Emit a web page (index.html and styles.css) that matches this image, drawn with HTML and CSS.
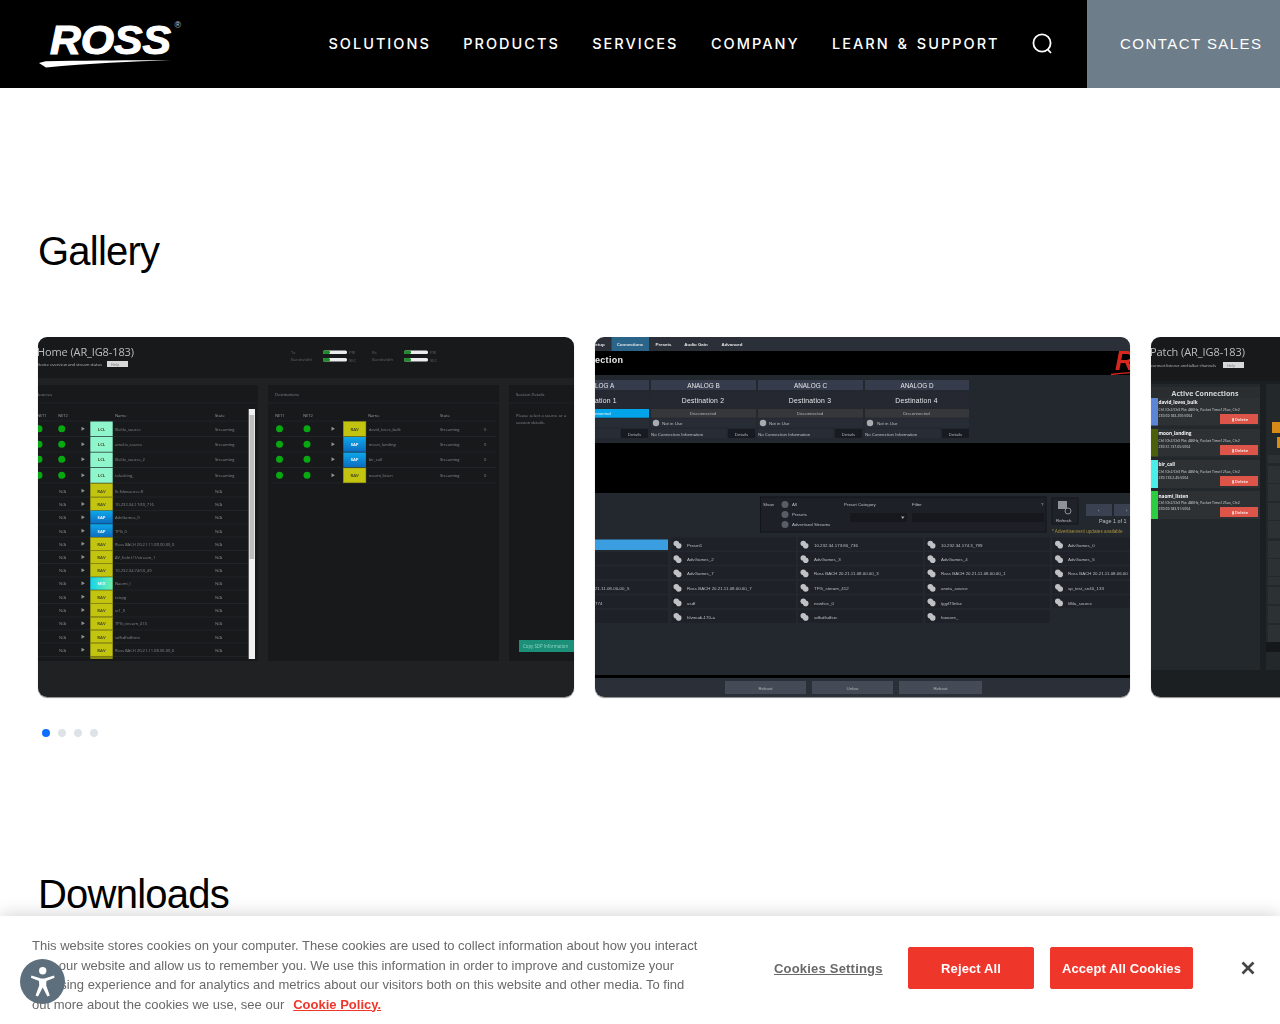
FILE: index.html
```html
<!DOCTYPE html>
<html lang="en">
<head>
<meta charset="utf-8">
<title>Ross Video – Gallery</title>
<link rel="stylesheet" href="styles.css">
</head>
<body>
<header class="site-header">
  <a class="logo" href="#" aria-label="Ross">
    <svg width="150" height="88" viewBox="0 0 150 88">
      <text class="logo-word" x="12" y="53.5" textLength="121" lengthAdjust="spacingAndGlyphs">ROSS</text>
      <text class="logo-reg" x="136.5" y="28">®</text>
      <path class="logo-swoosh" d="M1 63 L7.5 61.2 C50 60.4 95 60 133 60.2 C95 61.4 50 63.5 8 67.4 Z"/>
    </svg>
  </a>
  <nav class="main-nav">
    <a href="#">SOLUTIONS</a>
    <a href="#">PRODUCTS</a>
    <a href="#">SERVICES</a>
    <a href="#">COMPANY</a>
    <a href="#">LEARN &amp; SUPPORT</a>
    <button class="search" aria-label="Search">
      <svg width="22" height="22" viewBox="0 0 22 22"><circle class="search-ring" cx="10" cy="10" r="8.6"/><path class="search-ring" d="M15.6 16.4 L19 20"/></svg>
    </button>
  </nav>
  <a class="contact" href="#">CONTACT SALES</a>
</header>

<main class="content">
  <section class="gallery-section">
    <h2 class="section-title">Gallery</h2>
    <div class="track">

      <!-- Slide 1 : Home -->
      <figure class="slide">
        <svg class="shot" viewBox="38 337 536 360" width="536" height="360">
          <defs>
            <linearGradient id="g-sap" x1="0" y1="0" x2="0" y2="1"><stop offset="0" stop-color="#0ea8ea"/><stop offset="1" stop-color="#0d6cc0"/></linearGradient>
            <linearGradient id="g-mix" x1="0" y1="0" x2="1" y2="0"><stop offset="0" stop-color="#16d4ec"/><stop offset="1" stop-color="#6ff0a8"/></linearGradient>
          </defs>
          <rect class="s1-bg" x="38" y="337" width="536" height="360"/>
          <rect class="s1-top" x="38" y="337" width="536" height="41"/>
          <rect class="s1-panel" x="38" y="385" width="220" height="276"/>
          <rect class="s1-panel" x="268" y="385" width="231" height="276"/>
          <rect class="s1-panel" x="509" y="385" width="65" height="276"/>
          <text class="t-title" x="37" y="355.5" textLength="97">Home (AR_IG8-183)</text>
          <text class="t-tiny" x="37" y="366" textLength="65">device overview and stream status</text>
          <rect class="help" x="107" y="361" width="21" height="6"/>
          <text class="t-help" x="111" y="365.6">Help</text>
          <text class="t-dim" x="291" y="353.5">Tx</text><text class="t-dim" x="291" y="361">Bandwidth</text>
          <text class="t-dim" x="372" y="353.5">Rx</text><text class="t-dim" x="372" y="361">Bandwidth</text>
          <rect class="bar" x="323" y="350.5" width="24" height="3.4" rx="1.5"/><rect class="bar-g" x="323" y="350.5" width="7" height="3.4" rx="1.5"/>
          <rect class="bar" x="323" y="358" width="24" height="3.4" rx="1.5"/><rect class="bar-g" x="323" y="358" width="7" height="3.4" rx="1.5"/>
          <rect class="bar" x="404" y="350.5" width="24" height="3.4" rx="1.5"/><rect class="bar-g" x="404" y="350.5" width="7" height="3.4" rx="1.5"/>
          <rect class="bar" x="404" y="358" width="24" height="3.4" rx="1.5"/><rect class="bar-g" x="404" y="358" width="7" height="3.4" rx="1.5"/>
          <text class="t-dim" x="349" y="354">PRI</text><text class="t-dim" x="349" y="362">SEC</text>
          <text class="t-dim" x="430" y="354">PRI</text><text class="t-dim" x="430" y="362">SEC</text>

          <text class="t-cell" x="37" y="395.5">Sources</text>
          <text class="t-cell" x="275" y="395.5">Destinations</text>
          <text class="t-cell" x="516" y="395.5">Session Details</text>
          <text class="t-cell" x="516" y="416.5">Please select a source or a</text>
          <text class="t-cell" x="516" y="423.5">session details.</text>
          <path class="s1-line" d="M38 403H258M268 403H499M509 403H574"/>

          <text class="t-head" x="37" y="417">NET1</text><text class="t-head" x="58" y="417">NET2</text>
          <text class="t-head" x="115" y="417">Name</text><text class="t-head" x="215" y="417">State</text>
          <text class="t-head" x="275" y="417">NET1</text><text class="t-head" x="303" y="417">NET2</text>
          <text class="t-head" x="368" y="417">Name</text><text class="t-head" x="440" y="417">State</text>

          <path class="s1-line" d="M38 421H248M38 436.5H248M38 452H248M38 467.5H248M38 483H248M38 497H248M38 510.5H248M38 524H248M38 537H248M38 550.5H248M38 563.5H248M38 577H248M38 590H248M38 603.5H248M38 617H248M38 630H248M38 643H248M38 656.5H248"/>
          <path class="s1-line" d="M272 421H496M272 436.5H496M272 452H496M272 467.5H496M272 483H496"/>

          <g class="dots-green">
            <circle cx="39" cy="428.7" r="3.5"/><circle cx="61.7" cy="428.7" r="3.5"/>
            <circle cx="39" cy="444.3" r="3.5"/><circle cx="61.7" cy="444.3" r="3.5"/>
            <circle cx="39" cy="459.3" r="3.5"/><circle cx="61.7" cy="459.3" r="3.5"/>
            <circle cx="39" cy="475.3" r="3.5"/><circle cx="61.7" cy="475.3" r="3.5"/>
            <circle cx="279.5" cy="428.7" r="3.5"/><circle cx="307" cy="428.7" r="3.5"/>
            <circle cx="279.5" cy="444.3" r="3.5"/><circle cx="307" cy="444.3" r="3.5"/>
            <circle cx="279.5" cy="459.3" r="3.5"/><circle cx="307" cy="459.3" r="3.5"/>
            <circle cx="279.5" cy="475.3" r="3.5"/><circle cx="307" cy="475.3" r="3.5"/>
          </g>
          <path class="play" d="M81.5 426.7l3.4 2-3.4 2zM81.5 442.3l3.4 2-3.4 2zM81.5 457.3l3.4 2-3.4 2zM81.5 473.3l3.4 2-3.4 2zM81.5 488.7l3.4 2-3.4 2zM81.5 502l3.4 2-3.4 2zM81.5 515.3l3.4 2-3.4 2zM81.5 528.7l3.4 2-3.4 2zM81.5 541.7l3.4 2-3.4 2zM81.5 555l3.4 2-3.4 2zM81.5 568.3l3.4 2-3.4 2zM81.5 581.3l3.4 2-3.4 2zM81.5 594.7l3.4 2-3.4 2zM81.5 608l3.4 2-3.4 2zM81.5 621.3l3.4 2-3.4 2zM81.5 634.7l3.4 2-3.4 2zM81.5 647.7l3.4 2-3.4 2zM331.5 426.7l3.4 2-3.4 2zM331.5 442.3l3.4 2-3.4 2zM331.5 457.3l3.4 2-3.4 2zM331.5 473.3l3.4 2-3.4 2z"/>

          <rect class="b-lcl" x="90.3" y="421.5" width="22.4" height="14.8"/>
          <rect class="b-lcl" x="90.3" y="437" width="22.4" height="14.8"/>
          <rect class="b-lcl" x="90.3" y="452.5" width="22.4" height="14.8"/>
          <rect class="b-lcl" x="90.3" y="468" width="22.4" height="14.8"/>
          <rect class="b-rav" x="90.3" y="483.5" width="22.4" height="13.4"/>
          <rect class="b-rav" x="90.3" y="497.3" width="22.4" height="13"/>
          <rect class="b-sap" x="90.3" y="510.7" width="22.4" height="13"/>
          <rect class="b-sap" x="90.3" y="524.2" width="22.4" height="12.8"/>
          <rect class="b-rav" x="90.3" y="537.4" width="22.4" height="13"/>
          <rect class="b-rav" x="90.3" y="550.8" width="22.4" height="12.6"/>
          <rect class="b-rav" x="90.3" y="563.8" width="22.4" height="13"/>
          <rect class="b-mix" x="90.3" y="577.2" width="22.4" height="12.6"/>
          <rect class="b-rav" x="90.3" y="590.2" width="22.4" height="13"/>
          <rect class="b-rav" x="90.3" y="603.7" width="22.4" height="13"/>
          <rect class="b-rav" x="90.3" y="617.2" width="22.4" height="12.6"/>
          <rect class="b-rav" x="90.3" y="630.2" width="22.4" height="12.6"/>
          <rect class="b-rav" x="90.3" y="643.2" width="22.4" height="13"/>
          <rect class="b-rav-edge" x="90.3" y="656.4" width="22.4" height="2.6"/>
          <rect class="b-rav" x="343.3" y="421.5" width="22.6" height="14.8"/>
          <rect class="b-sap" x="343.3" y="437" width="22.6" height="14.8"/>
          <rect class="b-sap" x="343.3" y="452.5" width="22.6" height="14.8"/>
          <rect class="b-rav" x="343.3" y="468" width="22.6" height="14.8"/>

          <g class="t-badge-d">
            <text x="101.5" y="430.6">LCL</text><text x="101.5" y="446.2">LCL</text><text x="101.5" y="461.2">LCL</text><text x="101.5" y="477.2">LCL</text>
            <text x="101.5" y="492.6">RAV</text><text x="101.5" y="505.9">RAV</text>
            <text x="101.5" y="545.6">RAV</text><text x="101.5" y="558.9">RAV</text><text x="101.5" y="572.2">RAV</text><text x="101.5" y="598.6">RAV</text><text x="101.5" y="611.9">RAV</text><text x="101.5" y="625.2">RAV</text><text x="101.5" y="638.6">RAV</text><text x="101.5" y="651.6">RAV</text>
            <text x="354.6" y="430.6">RAV</text><text x="354.6" y="477.2">RAV</text>
          </g>
          <g class="t-badge-w">
            <text x="101.5" y="519.2">SAP</text><text x="101.5" y="532.6">SAP</text><text x="101.5" y="585.2">MIX</text>
            <text x="354.6" y="446.2">SAP</text><text x="354.6" y="461.2">SAP</text>
          </g>
          <g class="t-cell">
            <text x="115" y="430.6">lllolilo_source</text><text x="215" y="430.6">Streaming</text>
            <text x="115" y="446.2">amelia_source</text><text x="215" y="446.2">Streaming</text>
            <text x="115" y="461.2">lllolilo_source_2</text><text x="215" y="461.2">Streaming</text>
            <text x="115" y="477.2">taleeking_</text><text x="215" y="477.2">Streaming</text>
            <text x="115" y="492.6">llr.fdwsource.fl</text>
            <text x="115" y="505.9">10.232.34.17:80_716</text>
            <text x="115" y="519.2">AdvGames_0</text>
            <text x="115" y="532.6">TPG_0</text>
            <text x="115" y="545.6">Ross BACH 20.21.11.08.00.00_0</text>
            <text x="115" y="558.9">AV_fcdn1/1/stream_1</text>
            <text x="115" y="572.2">10.232.34.74:50_49</text>
            <text x="115" y="585.2">Naomi_l</text>
            <text x="115" y="598.6">tstrpg</text>
            <text x="115" y="611.9">sr1_0</text>
            <text x="115" y="625.2">TPG_stream_413</text>
            <text x="115" y="638.6">sdfsdfsdfnnn</text>
            <text x="115" y="651.6">Ross BACH 20.21.11.08.06.00_6</text>
            <text x="368.7" y="430.6">david_loves_bulk</text><text x="440" y="430.6">Streaming</text>
            <text x="368.7" y="446.2">moon_landing</text><text x="440" y="446.2">Streaming</text>
            <text x="368.7" y="461.2">bir_call</text><text x="440" y="461.2">Streaming</text>
            <text x="368.7" y="477.2">naomi_listen</text><text x="440" y="477.2">Streaming</text>
            <text x="484" y="430.6">0</text><text x="484" y="446.2">0</text><text x="484" y="461.2">0</text><text x="484" y="477.2">0</text>
            <text x="59" y="492.6">N/A</text><text x="215" y="492.6">N/A</text><text x="59" y="505.9">N/A</text><text x="215" y="505.9">N/A</text>
            <text x="59" y="519.2">N/A</text><text x="215" y="519.2">N/A</text><text x="59" y="532.6">N/A</text><text x="215" y="532.6">N/A</text>
            <text x="59" y="545.6">N/A</text><text x="215" y="545.6">N/A</text><text x="59" y="558.9">N/A</text><text x="215" y="558.9">N/A</text>
            <text x="59" y="572.2">N/A</text><text x="215" y="572.2">N/A</text><text x="59" y="585.2">N/A</text><text x="215" y="585.2">N/A</text>
            <text x="59" y="598.6">N/A</text><text x="215" y="598.6">N/A</text><text x="59" y="611.9">N/A</text><text x="215" y="611.9">N/A</text>
            <text x="59" y="625.2">N/A</text><text x="215" y="625.2">N/A</text><text x="59" y="638.6">N/A</text><text x="215" y="638.6">N/A</text>
            <text x="59" y="651.6">N/A</text><text x="215" y="651.6">N/A</text>
          </g>
          <rect class="sb-track" x="248.7" y="409" width="6.3" height="250"/>
          <rect class="sb-thumb" x="249.5" y="415" width="4.7" height="144"/>
          <rect class="copy" x="519" y="640" width="55" height="12"/>
          <text class="t-copy" x="523" y="647.6">Copy SDP Information</text>
        </svg>
      </figure>

      <!-- Slide 2 : Connections -->
      <figure class="slide">
        <svg class="shot" viewBox="595 337 536 360" width="536" height="360">
          <rect class="s2-bg" x="595" y="337" width="536" height="360"/>
          <rect class="s2-tabbar" x="595" y="337" width="536" height="14"/>
          <rect class="s2-tab" x="611.5" y="337" width="37.5" height="14"/>
          <g class="t-tab">
            <text x="600" y="346.4">etup</text><text x="630" y="346.4">Connections</text><text x="663.5" y="346.4">Presets</text><text x="696" y="346.4">Audio Gain</text><text x="732" y="346.4">Advanced</text>
          </g>
          <rect class="black" x="595" y="351" width="536" height="24"/>
          <text class="t-sec" x="595" y="363.2">ection</text>
          <text class="t-logo" x="1115" y="370">R</text>
          <path class="red-stroke" d="M1111 374.5 Q1120 373 1131 372.6"/>
          <rect class="black" x="595" y="443" width="536" height="50"/>
          <g class="s2-ch">
            <rect x="595" y="380" width="54" height="10"/><rect x="651" y="380" width="105" height="10"/><rect x="758" y="380" width="105" height="10"/><rect x="865" y="380" width="104" height="10"/>
          </g>
          <g class="s2-dest">
            <rect x="595" y="391" width="54" height="16"/><rect x="651" y="391" width="105" height="16"/><rect x="758" y="391" width="105" height="16"/><rect x="865" y="391" width="104" height="16"/>
          </g>
          <rect class="s2-conn" x="595" y="409" width="54" height="8.7"/>
          <g class="s2-disc">
            <rect x="651" y="409" width="105" height="8.7"/><rect x="758" y="409" width="105" height="8.7"/><rect x="865" y="409" width="104" height="8.7"/>
          </g>
          <g class="s2-info">
            <rect x="595" y="418.5" width="54" height="9"/><rect x="651" y="418.5" width="105" height="9"/><rect x="758" y="418.5" width="105" height="9"/><rect x="865" y="418.5" width="104" height="9"/>
            <rect x="595" y="429" width="25" height="9"/><rect x="651" y="429" width="75" height="9"/><rect x="758" y="429" width="75" height="9"/><rect x="865" y="429" width="75" height="9"/>
          </g>
          <g class="s2-details">
            <rect x="621" y="429" width="27" height="9"/><rect x="728" y="429" width="27" height="9"/><rect x="835" y="429" width="27" height="9"/><rect x="942" y="429" width="27" height="9"/>
          </g>
          <g class="t-ch">
            <text x="595" y="388" class="t-start">LOG A</text><text x="703.5" y="388">ANALOG B</text><text x="810.5" y="388">ANALOG C</text><text x="917" y="388">ANALOG D</text>
          </g>
          <g class="t-dest">
            <text x="595" y="402.5" class="t-start">ation 1</text><text x="703" y="402.5">Destination 2</text><text x="810" y="402.5">Destination 3</text><text x="916.5" y="402.5">Destination 4</text>
          </g>
          <text class="t-s2w" x="595" y="415">nnected</text>
          <g class="t-s2c">
            <text x="703" y="415">Disconnected</text><text x="810" y="415">Disconnected</text><text x="916.5" y="415">Disconnected</text>
            <text x="634.5" y="435.5">Details</text><text x="741.5" y="435.5">Details</text><text x="848.5" y="435.5">Details</text><text x="955.5" y="435.5">Details</text>
          </g>
          <circle class="radio-l" cx="656" cy="423" r="3.2"/><circle class="radio-l" cx="763" cy="423" r="3.2"/><circle class="radio-l" cx="870" cy="423" r="3.2"/>
          <g class="t-s2">
            <text x="662" y="425">Not in Use</text><text x="769" y="425">Not in Use</text><text x="877" y="425">Not in Use</text>
            <text x="651" y="435.5">No Connection Information</text><text x="758" y="435.5">No Connection Information</text><text x="865" y="435.5">No Connection Information</text>
          </g>

          <rect class="s2-box" x="760.5" y="497" width="285.5" height="35"/>
          <g class="t-s2">
            <text x="763" y="506">Show</text><text x="792" y="506">All</text><text x="792" y="516">Presets</text><text x="792" y="526">Advertised Streams</text>
            <text x="844" y="506">Preset Category</text><text x="852" y="519.5">All</text><text x="912" y="506">Filter</text><text x="1041" y="506">?</text>
          </g>
          <circle class="radio-d" cx="785" cy="504.5" r="3.5"/><circle class="radio-d" cx="785" cy="514.5" r="3.5"/><circle class="radio-d" cx="785" cy="524.5" r="3.5"/>
          <rect class="s2-input" x="850" y="513" width="57" height="9"/>
          <path class="t-fill" d="M901 516.5h3.5l-1.75 2.5z"/>
          <rect class="s2-input" x="912" y="513" width="132" height="9"/>
          <rect class="s2-refresh" x="1052" y="498" width="26" height="26"/>
          <rect class="s2-ico" x="1058" y="501" width="9" height="8"/>
          <circle class="s2-ico-ring" cx="1068" cy="511" r="3"/>
          <text class="t-s2" x="1056" y="521.5">Refresh</text>
          <rect class="s2-nav" x="1086" y="504" width="26" height="12"/><rect class="s2-nav" x="1114" y="504" width="17" height="12"/>
          <text class="t-s2" x="1098" y="511.5">‹</text><text class="t-s2" x="1126" y="511.5">›</text>
          <text class="t-page" x="1099" y="523">Page 1 of 1</text>
          <text class="t-amber" x="1052" y="533">* Advertisement updates available</text>

          <rect class="s2-sel" x="595" y="539.5" width="73" height="10.5"/>
          <g class="s2-row">
            <rect x="595" y="552" width="73" height="12.6"/><rect x="595" y="566.4" width="73" height="12.6"/><rect x="595" y="581" width="73" height="12.6"/><rect x="595" y="595.5" width="73" height="12.6"/><rect x="595" y="610" width="73" height="13"/>
            <rect x="671.5" y="537.5" width="124.5" height="13"/><rect x="671.5" y="552" width="124.5" height="12.6"/><rect x="671.5" y="566.4" width="124.5" height="12.6"/><rect x="671.5" y="581" width="124.5" height="12.6"/><rect x="671.5" y="595.5" width="124.5" height="12.6"/><rect x="671.5" y="610" width="124.5" height="13"/>
            <rect x="798" y="537.5" width="125" height="13"/><rect x="798" y="552" width="125" height="12.6"/><rect x="798" y="566.4" width="125" height="12.6"/><rect x="798" y="581" width="125" height="12.6"/><rect x="798" y="595.5" width="125" height="12.6"/><rect x="798" y="610" width="125" height="13"/>
            <rect x="925" y="537.5" width="125" height="13"/><rect x="925" y="552" width="125" height="12.6"/><rect x="925" y="566.4" width="125" height="12.6"/><rect x="925" y="581" width="125" height="12.6"/><rect x="925" y="595.5" width="125" height="12.6"/><rect x="925" y="610" width="125" height="13"/>
            <rect x="1052" y="537.5" width="79" height="13"/><rect x="1052" y="552" width="79" height="12.6"/><rect x="1052" y="566.4" width="79" height="12.6"/><rect x="1052" y="581" width="79" height="12.6"/><rect x="1052" y="595.5" width="79" height="12.6"/>
          </g>
          <g class="s2-cam">
            <g id="cams">
              <circle cx="676.3" cy="543.5" r="2.8"/><circle cx="676.3" cy="558" r="2.8"/><circle cx="676.3" cy="572.2" r="2.8"/><circle cx="676.3" cy="586.8" r="2.8"/><circle cx="676.3" cy="601.2" r="2.8"/><circle cx="676.3" cy="615.7" r="2.8"/>
              <circle cx="803.3" cy="543.5" r="2.8"/><circle cx="803.3" cy="558" r="2.8"/><circle cx="803.3" cy="572.2" r="2.8"/><circle cx="803.3" cy="586.8" r="2.8"/><circle cx="803.3" cy="601.2" r="2.8"/><circle cx="803.3" cy="615.7" r="2.8"/>
              <circle cx="930.3" cy="543.5" r="2.8"/><circle cx="930.3" cy="558" r="2.8"/><circle cx="930.3" cy="572.2" r="2.8"/><circle cx="930.3" cy="586.8" r="2.8"/><circle cx="930.3" cy="601.2" r="2.8"/><circle cx="930.3" cy="615.7" r="2.8"/>
              <circle cx="1057.8" cy="543.5" r="2.8"/><circle cx="1057.8" cy="558" r="2.8"/><circle cx="1057.8" cy="572.2" r="2.8"/><circle cx="1057.8" cy="586.8" r="2.8"/><circle cx="1057.8" cy="601.2" r="2.8"/>
            </g>
            <use href="#cams" transform="translate(2.4,2.2)"/>
          </g>
          <g class="t-s2">
            <text x="595" y="590">21.11.08-00-00_5</text><text x="595" y="604.5">774</text>
            <text x="687" y="546.8">Preset1</text><text x="687" y="561.2">AdvGames_2</text><text x="687" y="575.4">AdvGames_7</text><text x="687" y="590">Ross BACH 20.21.11.08.00.00_7</text><text x="687" y="604.5">asdf</text><text x="687" y="619">hlvmudi-170-a</text>
            <text x="814" y="546.8">10.232.34.173:80_736</text><text x="814" y="561.2">AdvGames_3</text><text x="814" y="575.4">Ross BACH 20.21.11.08.00.00_3</text><text x="814" y="590">TPG_stream_412</text><text x="814" y="604.5">newfsrc_0</text><text x="814" y="619">sdfsdfsdfsrc</text>
            <text x="941" y="546.8">10.232.34.174.3_799</text><text x="941" y="561.2">AdvGames_4</text><text x="941" y="575.4">Ross BACH 20.21.11.08.00.00_1</text><text x="941" y="590">aneta_source</text><text x="941" y="604.5">tjgyf73nlse</text><text x="941" y="619">fanoore_</text>
            <text x="1068" y="546.8">AdvGames_0</text><text x="1068" y="561.2">AdvGames_5</text><text x="1068" y="575.4">Ross BACH 20.21.11.08.06.00</text><text x="1068" y="590">sp_test_sn40_133</text><text x="1068" y="604.5">lillila_source</text>
          </g>
          <rect class="black" x="595" y="675" width="536" height="3"/>
          <rect class="s2-tabbar" x="595" y="678" width="536" height="19"/>
          <rect class="s2-btn" x="725" y="681" width="81" height="13"/><rect class="s2-btn" x="812" y="681" width="81" height="13"/><rect class="s2-btn" x="899" y="681" width="83" height="13"/>
          <g class="t-s2c"><text x="765.5" y="689.5">Reboot</text><text x="852.5" y="689.5">Unbar</text><text x="940.5" y="689.5">Reboot</text></g>
        </svg>
      </figure>

      <!-- Slide 3 : Patch -->
      <figure class="slide">
        <svg class="shot" viewBox="1151 337 536 360" width="536" height="360">
          <rect class="s3-bg" x="1151" y="337" width="536" height="360"/>
          <rect class="s3-top" x="1151" y="337" width="536" height="44"/>
          <rect class="s3-panel" x="1151" y="384" width="109" height="286"/>
          <rect class="s3-panel2" x="1266" y="384" width="420" height="286"/>
          <text class="t-title" x="1150" y="356" textLength="95">Patch (AR_IG8-183)</text>
          <text class="t-tiny" x="1151" y="367" textLength="65">connect listener and talker channels</text>
          <rect class="help" x="1223" y="362" width="21" height="6"/>
          <text class="t-help" x="1227" y="366.6">Help</text>
          <rect class="s3-head" x="1151" y="387" width="109" height="11"/>
          <text class="t-active" x="1205" y="395.5">Active Connections</text>

          <rect class="s3-card" x="1151" y="398" width="109" height="27.5"/>
          <rect class="s3-card" x="1151" y="429" width="109" height="27.5"/>
          <rect class="s3-card" x="1151" y="460" width="109" height="28"/>
          <rect class="s3-card" x="1151" y="491" width="109" height="28"/>
          <rect class="s3-a" x="1151" y="398" width="7" height="27.5"/>
          <rect class="s3-b" x="1151" y="429" width="7" height="27.5"/>
          <rect class="s3-c" x="1151" y="460" width="7" height="28"/>
          <rect class="s3-d" x="1151" y="491" width="7" height="28"/>
          <g class="t-card">
            <text x="1158.5" y="403.8">david_loves_bulk</text><text x="1158.5" y="435">moon_landing</text><text x="1158.5" y="466.2">bir_call</text><text x="1158.5" y="497.5">naomi_listen</text>
          </g>
          <g class="t-det">
            <text x="1158.5" y="410.5">Ch1/Ch2/Ch3 Pkt: 48KHz, Packet Time:125us, Ch:2</text><text x="1158.5" y="416.5">239.69.183.200:5004</text>
            <text x="1158.5" y="441.5">Ch1/Ch2/Ch3 Pkt: 48KHz, Packet Time:125us, Ch:2</text><text x="1158.5" y="447.5">239.31.137.65:5004</text>
            <text x="1158.5" y="472.5">Ch1/Ch2/Ch3 Pkt: 48KHz, Packet Time:125us, Ch:2</text><text x="1158.5" y="478.5">239.133.2.45:5004</text>
            <text x="1158.5" y="503.5">Ch1/Ch2/Ch3 Pkt: 48KHz, Packet Time:125us, Ch:2</text><text x="1158.5" y="509.5">239.69.183.91:5004</text>
          </g>
          <rect class="s3-del" x="1220" y="414" width="38" height="10"/>
          <rect class="s3-del" x="1220" y="445" width="38" height="10"/>
          <rect class="s3-del" x="1220" y="476" width="38" height="10"/>
          <rect class="s3-del" x="1220" y="507" width="38" height="10"/>
          <g class="t-del">
            <text x="1240" y="420.8">▮ Delete</text><text x="1240" y="451.8">▮ Delete</text><text x="1240" y="482.8">▮ Delete</text><text x="1240" y="513.8">▮ Delete</text>
          </g>
          <rect class="s3-amber" x="1272" y="422" width="10" height="11"/>
          <rect class="s3-amber" x="1277" y="437" width="6" height="11"/>
          <g class="s3-row">
            <rect x="1268" y="455" width="14" height="8"/><rect x="1268" y="466" width="14" height="17"/><rect x="1268" y="484" width="14" height="17"/><rect x="1268" y="503" width="14" height="17"/><rect x="1268" y="521" width="14" height="17"/><rect x="1268" y="541" width="14" height="17"/><rect x="1268" y="559" width="14" height="17"/><rect x="1268" y="577" width="14" height="8"/><rect x="1268" y="587" width="14" height="17"/><rect x="1268" y="606" width="14" height="17"/><rect x="1268" y="625" width="14" height="17"/>
          </g>
          <rect class="s3-dark" x="1266" y="642" width="14" height="10"/>
        </svg>
      </figure>
    </div>
    <div class="dots">
      <span class="dot dot-active"></span><span class="dot"></span><span class="dot"></span><span class="dot"></span>
    </div>
  </section>

  <section class="downloads-section">
    <h2 class="section-title">Downloads</h2>
  </section>
</main>

<aside class="cookie-bar">
  <p class="cookie-text">This website stores cookies on your computer. These cookies are used to collect information about how you interact with our website and allow us to remember you. We use this information in order to improve and customize your browsing experience and for analytics and metrics about our visitors both on this website and other media. To find out more about the cookies we use, see our <a class="cookie-link" href="#">Cookie Policy.</a></p>
  <div class="cookie-actions">
    <a class="cookie-settings" href="#">Cookies Settings</a>
    <button class="cookie-btn cookie-reject">Reject All</button>
    <button class="cookie-btn cookie-accept">Accept All Cookies</button>
    <button class="cookie-close" aria-label="Close">
      <svg width="14" height="14" viewBox="0 0 14 14"><path class="close-x" d="M1.5 1.5 L12.5 12.5 M12.5 1.5 L1.5 12.5"/></svg>
    </button>
  </div>
</aside>

<button class="a11y" aria-label="Accessibility">
  <svg width="45" height="45" viewBox="0 0 45 45">
    <circle class="a11y-fill" cx="22.7" cy="11.7" r="3.7"/>
    <path class="a11y-fill" d="M11.5 16.5 L21 19.5 H24.5 L34 16.5 L34.6 18.8 L26.4 22 L26.2 26.5 L29.8 36.6 L27.4 37.6 L22.7 28.6 L18 37.6 L15.6 36.6 L19.2 26.5 L19 22 L10.9 18.8 Z"/>
  </svg>
</button>
</body>
</html>
```
FILE: styles.css
```css
* { box-sizing: border-box; }
html, body { margin: 0; padding: 0; }
body { background: #fff; color: #000; font-family: "Liberation Sans", Arial, sans-serif; overflow-x: hidden; }

/* header */
.site-header { display: flex; align-items: stretch; height: 88px; background: #000; }
.logo { display: block; width: 150px; margin-left: 38px; height: 88px; }
.logo-word { font: italic 700 40px "Liberation Sans", sans-serif; fill: #fff; stroke: #fff; stroke-width: 1.1px; }
.logo-reg { font: 9px "Liberation Sans", sans-serif; fill: #ccc; }
.logo-swoosh { fill: #fff; }
.main-nav { display: flex; align-items: center; gap: 32.5px; margin-left: auto; padding-bottom: 2px; }
.main-nav a { color: #fff; text-decoration: none; font: 500 14.5px Inter, "Liberation Sans", sans-serif; letter-spacing: 2px; word-spacing: 2px; }
.search { display: flex; background: none; border: 0; padding: 0; margin: 2px 33px 0 0; }
.search-ring { fill: none; stroke: #fff; stroke-width: 1.8; }
.contact { width: 193px; display: flex; align-items: center; padding: 0 0 2px 33px; background: #6e7d8a; color: #fff; text-decoration: none; font: 400 15px "Liberation Sans", sans-serif; letter-spacing: 1.45px; }

/* main */
.content { padding: 139px 0 0 38px; overflow: hidden; }
.section-title { margin: 0; font: 400 40px/48px "Liberation Sans", sans-serif; letter-spacing: -0.78px; color: #000; }
.track { display: flex; gap: 21px; margin-top: 62px; width: 1700px; }
.slide { margin: 0; flex: 0 0 535.6px; height: 360px; border-radius: 9px; overflow: hidden; box-shadow: 0 1px 1px #8a8a8a; }
.shot { display: block; filter: blur(0.6px); font-family: "Open Sans", sans-serif; }
.dots { display: flex; gap: 8px; margin: 32px 0 0 4px; }
.dot { width: 8px; height: 8px; border-radius: 50%; background: #dde3e7; }
.dot-active { background: #0d6efd; }
.downloads-section { margin-top: 133px; }

/* slide 1 */
.s1-bg { fill: #1f2123; }
.s1-top { fill: #18191b; }
.s1-panel { fill: #17191b; }
.s1-line { stroke: #212427; stroke-width: 1; fill: none; }
.t-title { font-size: 11px; fill: #bcbec0; }
.t-tiny { font-size: 4.3px; fill: #b5b7b9; }
.help { fill: #d8d8d8; }
.t-help { font-size: 3.8px; fill: #777; }
.t-dim { font-size: 4.2px; fill: #5c6062; }
.t-cell { font-size: 4.1px; fill: #85888b; }
.t-head { font-size: 4.1px; fill: #999c9f; }
.bar { fill: #ececec; }
.bar-g { fill: #1f8a2c; }
.dots-green { fill: #08a810; }
.play { fill: #8e9092; }
.b-lcl { fill: #8ff5cc; }
.b-rav { fill: #c3c410; stroke: #8f9012; stroke-width: .5; }
.b-rav-edge { fill: #8c8d0c; }
.b-sap { fill: url(#g-sap); }
.b-mix { fill: url(#g-mix); }
.t-badge-d, .t-badge-w { font-size: 4.2px; font-weight: 700; text-anchor: middle; }
.t-badge-d { fill: #4a4d20; }
.t-badge-w { fill: #e8f6ff; }
.sb-track { fill: #f0f0f0; }
.sb-thumb { fill: #bdbdbd; }
.copy { fill: #1c8f78; }
.t-copy { font-size: 4.4px; fill: #8fd6c4; }

/* slide 2 */
.s2-bg { fill: #23272e; }
.s2-tabbar { fill: #2b2f37; }
.s2-tab { fill: #2b6489; }
.black { fill: #000; }
.t-tab { font: 700 4.4px "Liberation Sans", sans-serif; fill: #e2e5e9; text-anchor: middle; }
.t-sec { font: 700 9px "Liberation Sans", sans-serif; fill: #e8e8e8; letter-spacing: .3px; }
.t-logo { font: italic 700 27px "Liberation Sans", sans-serif; fill: #d8271c; }
.red-stroke { fill: none; stroke: #d8271c; stroke-width: 1.4; }
.s2-ch rect { fill: #363c4b; }
.s2-dest rect { fill: #252830; }
.s2-conn { fill: #02a5e9; }
.s2-disc rect { fill: #36373b; }
.s2-info rect { fill: #282c34; }
.s2-details rect { fill: #171a20; }
.t-ch { font: 400 6.4px "Liberation Sans", sans-serif; fill: #e4e6e9; text-anchor: middle; }
.t-dest { font: 400 6.8px "Liberation Sans", sans-serif; fill: #e4e6e9; text-anchor: middle; letter-spacing: .2px; }
.t-ch .t-start, .t-dest .t-start { text-anchor: start; }
.t-s2w { font: 4.4px "Liberation Sans", sans-serif; fill: #eef9fd; }
.t-s2c { font: 4.4px "Liberation Sans", sans-serif; fill: #aeb1b6; text-anchor: middle; }
.t-s2 { font: 4.4px "Liberation Sans", sans-serif; fill: #bcbfc4; }
.t-page { font: 5.4px "Liberation Sans", sans-serif; fill: #bcbfc4; }
.t-amber { font: 4.7px "Liberation Sans", sans-serif; fill: #a98f3c; }
.t-fill { fill: #a9acb1; }
.radio-l { fill: #a8abb0; }
.radio-d { fill: #585d66; }
.s2-box { fill: #1d2026; stroke: #121418; stroke-width: 1; }
.s2-input { fill: #16181d; }
.s2-refresh { fill: #1f2228; stroke: #15171b; stroke-width: 1; }
.s2-ico { fill: #8f9398; }
.s2-ico-ring { fill: none; stroke: #8f9398; stroke-width: 1; }
.s2-nav { fill: #3a4252; }
.s2-sel { fill: #3a9ee0; }
.s2-row rect { fill: #1e2127; }
.s2-cam { fill: #bfc1c4; }
.s2-btn { fill: #454b56; }

/* slide 3 */
.s3-bg { fill: #1c1f21; }
.s3-top { fill: #18191a; }
.s3-panel { fill: #22282b; }
.s3-panel2 { fill: #23282b; }
.s3-head { fill: #2a2e31; }
.t-active { font-size: 7px; font-weight: 700; fill: #d2d6d8; text-anchor: middle; }
.s3-card { fill: #2d3134; }
.s3-a { fill: #5b85d6; }
.s3-b { fill: #4b6008; }
.s3-c { fill: #4aeee8; }
.s3-d { fill: #2ecc40; }
.t-card { font-size: 4.7px; font-weight: 700; fill: #f2f2f2; }
.t-det { font-size: 3.5px; fill: #d6d9db; }
.s3-del { fill: #dd5548; }
.t-del { font-size: 4px; font-weight: 700; fill: #f8dcd8; text-anchor: middle; }
.s3-amber { fill: #d68a18; }
.s3-row rect { fill: #2c3134; }
.s3-dark { fill: #15181a; }

/* cookie banner */
.cookie-bar { position: fixed; left: 0; right: 0; bottom: 0; height: 108px; background: #fff; box-shadow: 0 0 18px rgba(0,0,0,.2); display: flex; align-items: flex-start; padding: 20px 0 0 32px; }
.cookie-text { margin: 0; width: 672px; flex: none; font-size: 13px; line-height: 19.5px; color: #696969; }
.cookie-link { margin-left: 5.4px; color: #ef362b; font-weight: 700; text-decoration: underline; }
.cookie-actions { display: flex; align-items: center; margin: 11px 0 0 70px; }
.cookie-settings { width: 108px; color: #696969; font-size: 13px; font-weight: 700; letter-spacing: .2px; white-space: nowrap; text-decoration: underline; }
.cookie-btn { height: 42px; border: 1px solid #ef362b; border-radius: 2px; background: #ef362b; color: #fff; font: 700 13px "Liberation Sans", sans-serif; letter-spacing: .1px; padding: 0; }
.cookie-reject { width: 126px; margin-left: 26px; }
.cookie-accept { width: 143px; margin-left: 16px; }
.cookie-close { display: flex; background: none; border: 0; padding: 0; margin-left: 48px; }
.close-x { fill: none; stroke: #444; stroke-width: 2.6; }

.a11y { position: fixed; left: 20px; top: 959px; width: 45px; height: 45px; padding: 0; border: 0; border-radius: 50%; background: #5d6f7d; }
.a11y svg { display: block; }
.a11y-fill { fill: #fff; }
```
